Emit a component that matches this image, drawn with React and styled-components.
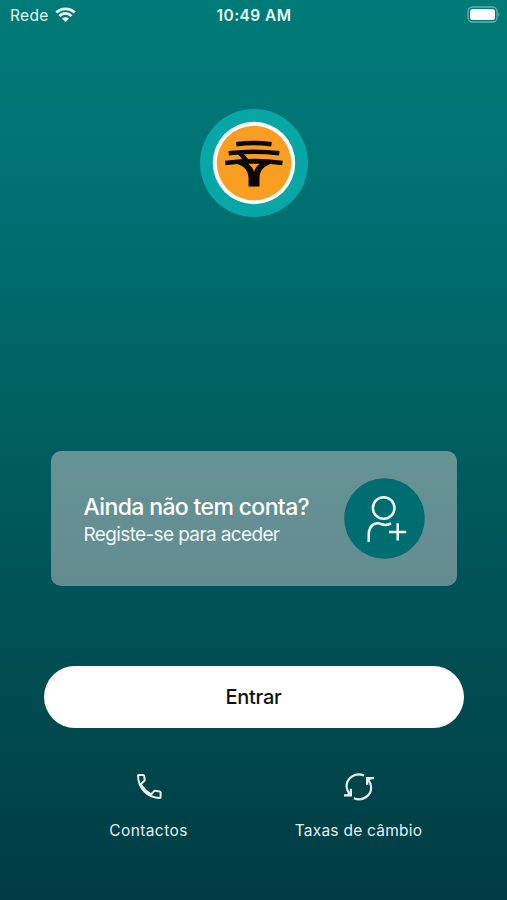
import React from 'react';
import styled, { createGlobalStyle } from 'styled-components';

const GlobalStyle = createGlobalStyle`
  * { box-sizing: border-box; }
  body { margin: 0; }
`;

const Screen = styled.main`
  display: flex;
  flex-direction: column;
  align-items: center;
  width: 507px;
  height: 900px;
  overflow: hidden;
  color: #fff;
  font-family: Inter, sans-serif;
  background: linear-gradient(180deg, #007b78 0%, #007273 20%, #006264 42%, #005458 64%, #00474d 84%, #003b43 100%);
`;

const StatusBar = styled.header`
  display: grid;
  grid-template-columns: 1fr auto 1fr;
  align-items: center;
  width: 100%;
  height: 30px;
  padding: 0 7px 0 10px;
  color: #e4f7f5;
`;

const Carrier = styled.div`
  display: flex;
  align-items: center;
  gap: 6px;
  font-size: 15.5px;
  letter-spacing: 0.35px;
`;

const Clock = styled.time`
  margin-left: -2px;
  font-size: 15.5px;
  font-weight: 600;
  letter-spacing: 0.45px;
`;

const Battery = styled.svg`
  justify-self: end;
  margin-top: -2px;
`;

const Logo = styled.svg`
  flex: none;
  margin-top: 78.5px;
`;

const RegisterCard = styled.section`
  display: flex;
  flex: none;
  justify-content: space-between;
  align-items: center;
  width: 406px;
  height: 135px;
  margin-top: 234.5px;
  padding: 0 32px 0 32px;
  border-radius: 10px;
  background: linear-gradient(180deg, #669395, #648c90);
`;

const CardText = styled.div`
  display: flex;
  flex-direction: column;
  padding: 5px 0 0 1px;
  white-space: nowrap;
`;

const CardTitle = styled.h1`
  margin: 0;
  font-size: 23px;
  line-height: 27px;
  font-weight: 500;
  letter-spacing: -0.63px;
`;

const CardSubtitle = styled.p`
  margin: 0;
  font-size: 19px;
  line-height: 27px;
  letter-spacing: -0.63px;
  color: #f0f8f8;
`;

const AddUser = styled.svg`
  flex: none;
`;

const LoginButton = styled.button`
  flex: none;
  width: 420px;
  height: 62px;
  margin-top: 79.5px;
  padding: 0;
  border: 0;
  border-radius: 31px;
  background: #fff;
  color: #111;
  font: 500 20px/24px Inter, sans-serif;
  letter-spacing: -0.3px;
`;

const Shortcuts = styled.nav`
  display: grid;
  grid-template-columns: 210px 210px;
  margin-top: 43.5px;
`;

const Shortcut = styled.a`
  display: flex;
  flex-direction: column;
  align-items: center;
  gap: 17px;
  color: #e4f0f1;
`;

const ShortcutLabel = styled.span`
  font-size: 15.5px;
  line-height: 22px;
  letter-spacing: ${(p) => p.$spacing};
  white-space: nowrap;
`;

export default function App() {
  return (
    <>
      <GlobalStyle />
      <Screen>
        <StatusBar>
          <Carrier>
            Rede
            <svg width="21" height="16" viewBox="0 0 21 16" fill="none" stroke="currentColor" strokeWidth="2.8">
              <path d="M1.3 5.6Q5.2 1.8 10.5 1.8T19.7 5.6" />
              <path d="M4.5 9.2Q7.1 6.4 10.5 6.4T16.5 9.2" />
              <path d="M7 11.6Q10.5 8.8 14 11.6L10.5 15Z" fill="currentColor" stroke="none" />
            </svg>
          </Carrier>
          <Clock>10:49 AM</Clock>
          <Battery width="33" height="17" viewBox="0 0 33 17">
            <rect x="1" y="1" width="29" height="15" rx="4.5" fill="none" stroke="#65b0ad" strokeWidth="1.3" />
            <rect x="3" y="3" width="25" height="11" rx="2.8" fill="#fff" />
            <path d="M31.3 6Q33.5 8.5 31.3 11Z" fill="#65b0ad" />
          </Battery>
        </StatusBar>

        <Logo width="108" height="108" viewBox="0 0 108 108">
          <circle cx="54" cy="54" r="54" fill="#08a7a6" />
          <circle cx="54" cy="54" r="41.2" fill="#fff" />
          <circle cx="54" cy="54" r="37.3" fill="#fa9e22" />
          <g fill="none" stroke="#090804" strokeWidth="4.5">
            <path d="M36.3 35.2Q54 32.8 71.5 35.2" />
            <path d="M28.7 44.2Q54 41.2 79.3 44.2" />
            <path d="M25.3 54Q54 50.2 82.5 54" />
          </g>
          <path d="M37 44.5H43.5L50 52.5H43.5Q41.5 48 37 44.5Z" fill="#090804" />
          <path d="M36 52.5H72V54.5C64 56.5 59.5 62 59.5 69V77.5H48.5V69C48.5 62 44 56.5 36 54.5Z" fill="#090804" />
          <path d="M48.3 54.7H59.7Q55.2 58 54 63Q52.8 58 48.3 54.7Z" fill="#fa9e22" />
        </Logo>

        <RegisterCard>
          <CardText>
            <CardTitle>Ainda não tem conta?</CardTitle>
            <CardSubtitle>Registe-se para aceder</CardSubtitle>
          </CardText>
          <AddUser width="81" height="81" viewBox="0 0 81 81">
            <circle cx="40.5" cy="40.5" r="40.3" fill="#006e70" />
            <g fill="none" stroke="#effafa" strokeWidth="2.5">
              <circle cx="39.7" cy="30" r="10.8" />
              <path d="M24.7 64V57Q24.7 48.5 30.5 46Q34 44.5 37 46Q41.5 48 47 45.5" />
              <path d="M53.7 45.3V62.5M45 53.9H62.2" />
            </g>
          </AddUser>
        </RegisterCard>

        <LoginButton>Entrar</LoginButton>

        <Shortcuts>
          <Shortcut>
            <svg width="32" height="32" viewBox="0 0 32 32" fill="none" stroke="currentColor" strokeWidth="2" strokeLinejoin="round">
              <path d="M5 4.6Q5 4 5.6 4H10.2Q11 4 11.2 4.8L11.7 8.8Q11.8 9.6 11.2 10.1L7.8 13Q11.4 19.5 18.2 23.3L21 20.2Q21.5 19.7 22.2 19.8L26.8 20.4Q27.6 20.6 27.6 21.4V26.2Q27.6 27 26.8 27C14.5 26.7 5.2 17.5 5 4.6Z" />
            </svg>
            <ShortcutLabel $spacing="0.4px">Contactos</ShortcutLabel>
          </Shortcut>
          <Shortcut>
            <svg width="32" height="32" viewBox="0 0 32 32" fill="none" stroke="currentColor" strokeWidth="2.2">
              <path d="M21 4.6C12 .8 3.3 7.5 3.6 16Q4 19.5 6.5 22.7" />
              <path d="M10.8 27.2C20 31 28.7 24 28.1 15.8Q27.7 12.3 25.5 9.2" />
              <path d="M31 7.2H24.1V13.7" />
              <path d="M1 24.3H7.9V17.7" />
              <path d="M24 7.2H29L24 12.2ZM8 19.3V24.3H3Z" fill="currentColor" stroke="none" />
            </svg>
            <ShortcutLabel $spacing="0.25px">Taxas de câmbio</ShortcutLabel>
          </Shortcut>
        </Shortcuts>
      </Screen>
    </>
  );
}
